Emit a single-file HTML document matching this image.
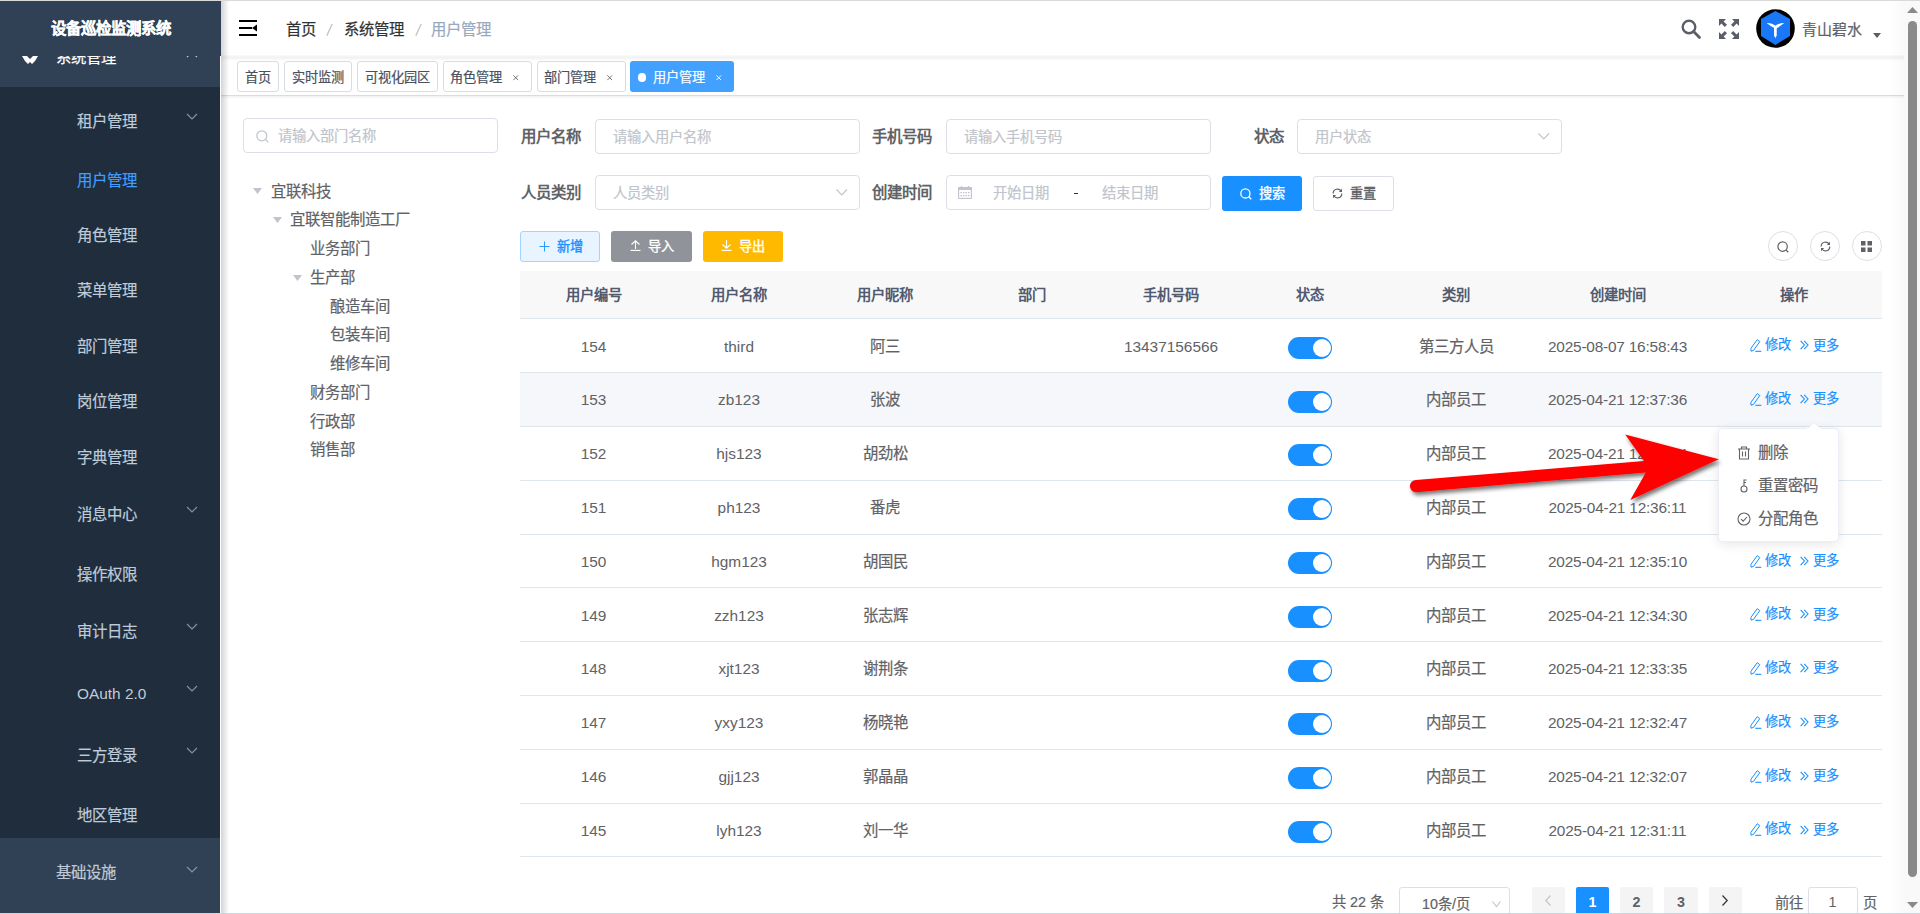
<!DOCTYPE html><html lang="zh-CN"><head><meta charset="utf-8"><title>用户管理</title><style>
*{box-sizing:border-box;margin:0;padding:0}
html,body{width:1920px;height:914px;overflow:hidden;background:#fff}
body{position:relative;font-family:"Liberation Sans",sans-serif;}
.t{position:absolute;white-space:nowrap;-webkit-text-stroke:0.2px currentColor}
.b{position:absolute}
svg{position:absolute;overflow:visible}
</style></head><body>
<div class="b" style="left:0px;top:0px;width:1920px;height:1px;background:#d9d9d9;z-index:50"></div>
<div class="b" style="left:0px;top:1px;width:220px;height:913px;background:#1f2d3d"></div>
<div class="b" style="left:0px;top:1px;width:220px;height:86px;background:#304156"></div>
<div class="b" style="left:0px;top:838px;width:220px;height:75px;background:#304156"></div>
<div class="t " style="left:56px;top:48.00px;font-size:15.4px;line-height:20px;color:#ffffff;font-weight:normal;">系统管理</div>
<svg style="left:22px;top:50px" width="16" height="16" viewBox="0 0 16 16"><path d="M0 6 L5 6 L8 9 L11 6 L16 6 L13 11 L10 14 L8 12 L6 14 L3 11 Z" fill="#fff"/></svg>
<div class="b" style="left:0px;top:1px;width:221px;height:55px;background:#304156;z-index:2"></div>
<div class="t " style="left:0px;top:18.00px;font-size:15.4px;line-height:22px;color:#fff;font-weight:bold;-webkit-text-stroke:0;width:221px;text-align:center;z-index:3;left:0;-webkit-text-stroke:0.3px #fff">设备巡检监测系统</div>
<div class="t " style="left:77px;top:110.50px;font-size:15.4px;line-height:22px;color:#bfcbd9;font-weight:normal;">租户管理</div>
<svg style="left:187px;top:113.5px;z-index:1" width="10" height="6" viewBox="0 0 10 6"><path d="M0 0 L5 5 L10 0" fill="none" stroke="#909399" stroke-width="1.1"/></svg>
<div class="t " style="left:77px;top:170.00px;font-size:15.4px;line-height:22px;color:#409eff;font-weight:normal;">用户管理</div>
<div class="t " style="left:77px;top:225.00px;font-size:15.4px;line-height:22px;color:#bfcbd9;font-weight:normal;">角色管理</div>
<div class="t " style="left:77px;top:280.00px;font-size:15.4px;line-height:22px;color:#bfcbd9;font-weight:normal;">菜单管理</div>
<div class="t " style="left:77px;top:335.50px;font-size:15.4px;line-height:22px;color:#bfcbd9;font-weight:normal;">部门管理</div>
<div class="t " style="left:77px;top:391.00px;font-size:15.4px;line-height:22px;color:#bfcbd9;font-weight:normal;">岗位管理</div>
<div class="t " style="left:77px;top:446.50px;font-size:15.4px;line-height:22px;color:#bfcbd9;font-weight:normal;">字典管理</div>
<div class="t " style="left:77px;top:503.50px;font-size:15.4px;line-height:22px;color:#bfcbd9;font-weight:normal;">消息中心</div>
<svg style="left:187px;top:506.5px;z-index:1" width="10" height="6" viewBox="0 0 10 6"><path d="M0 0 L5 5 L10 0" fill="none" stroke="#909399" stroke-width="1.1"/></svg>
<div class="t " style="left:77px;top:563.50px;font-size:15.4px;line-height:22px;color:#bfcbd9;font-weight:normal;">操作权限</div>
<div class="t " style="left:77px;top:621.00px;font-size:15.4px;line-height:22px;color:#bfcbd9;font-weight:normal;">审计日志</div>
<svg style="left:187px;top:624px;z-index:1" width="10" height="6" viewBox="0 0 10 6"><path d="M0 0 L5 5 L10 0" fill="none" stroke="#909399" stroke-width="1.1"/></svg>
<div class="t " style="left:77px;top:682.50px;font-size:15.4px;line-height:22px;color:#bfcbd9;font-weight:normal;-webkit-text-stroke:0;">OAuth 2.0</div>
<svg style="left:187px;top:685.5px;z-index:1" width="10" height="6" viewBox="0 0 10 6"><path d="M0 0 L5 5 L10 0" fill="none" stroke="#909399" stroke-width="1.1"/></svg>
<div class="t " style="left:77px;top:744.50px;font-size:15.4px;line-height:22px;color:#bfcbd9;font-weight:normal;">三方登录</div>
<svg style="left:187px;top:747.5px;z-index:1" width="10" height="6" viewBox="0 0 10 6"><path d="M0 0 L5 5 L10 0" fill="none" stroke="#909399" stroke-width="1.1"/></svg>
<div class="t " style="left:77px;top:804.50px;font-size:15.4px;line-height:22px;color:#bfcbd9;font-weight:normal;">地区管理</div>
<svg style="left:187px;top:51px;z-index:1" width="10" height="6" viewBox="0 0 10 6"><path d="M0 6 L5 1 L10 6" fill="none" stroke="#bfcbd9" stroke-width="1.1"/></svg>
<div class="t " style="left:55.5px;top:861.50px;font-size:15.4px;line-height:22px;color:#bfcbd9;font-weight:normal;">基础设施</div>
<svg style="left:187px;top:867px;z-index:1" width="10" height="6" viewBox="0 0 10 6"><path d="M0 0 L5 5 L10 0" fill="none" stroke="#909399" stroke-width="1.1"/></svg>
<div class="b" style="left:220px;top:56px;width:1px;height:858px;background:#fff;z-index:4"></div>
<div class="b" style="left:221px;top:1px;width:8px;height:913px;background:linear-gradient(to right, rgba(0,21,41,0.18), rgba(0,21,41,0));z-index:4"></div>
<div class="b" style="left:221px;top:55px;width:1683px;height:6px;background:linear-gradient(rgba(0,21,41,0.02),rgba(0,21,41,0.06) 40%,rgba(0,21,41,0))"></div>
<svg style="left:239px;top:20px" width="18" height="16" viewBox="0 0 18 16"><rect x="0" y="0" width="18" height="2" fill="#000"/><rect x="0" y="7" width="13" height="2" fill="#000"/><path d="M13 8 L18 4.5 L18 11.5 Z" fill="#000"/><rect x="0" y="14" width="18" height="2" fill="#000"/></svg>
<div class="t " style="left:286px;top:19.00px;font-size:15.4px;line-height:22px;color:#303133;font-weight:normal;">首页</div>
<svg style="left:325px;top:23px" width="9" height="14" viewBox="0 0 9 14"><path d="M7.2 1 L1.8 12.8" stroke="#c0c4cc" stroke-width="1.4"/></svg>
<div class="t " style="left:343.5px;top:19.00px;font-size:15.4px;line-height:22px;color:#303133;font-weight:normal;">系统管理</div>
<svg style="left:413.5px;top:23px" width="9" height="14" viewBox="0 0 9 14"><path d="M7.2 1 L1.8 12.8" stroke="#c0c4cc" stroke-width="1.4"/></svg>
<div class="t " style="left:431px;top:19.00px;font-size:15.4px;line-height:22px;color:#97a8be;font-weight:normal;">用户管理</div>
<svg style="left:1681px;top:19px" width="20" height="20" viewBox="0 0 20 20"><circle cx="8" cy="8" r="6.3" fill="none" stroke="#5a5e66" stroke-width="2.4"/><path d="M12.6 12.6 L18.5 18.5" stroke="#5a5e66" stroke-width="2.8" stroke-linecap="round"/></svg>
<svg style="left:1719px;top:19px" width="20" height="20" viewBox="0 0 20 20" fill="#5a5e66"><path d="M0 0 L7 0 L4.6 2.4 L8 5.8 L5.8 8 L2.4 4.6 L0 7 Z"/><path d="M20 0 L13 0 L15.4 2.4 L12 5.8 L14.2 8 L17.6 4.6 L20 7 Z"/><path d="M0 20 L7 20 L4.6 17.6 L8 14.2 L5.8 12 L2.4 15.4 L0 13 Z"/><path d="M20 20 L13 20 L15.4 17.6 L12 14.2 L14.2 12 L17.6 15.4 L20 13 Z"/></svg>
<svg style="left:1756px;top:9px" width="39" height="39" viewBox="0 0 39 39"><circle cx="19.5" cy="19.5" r="19.3" fill="#000"/><path d="M19.4 1.9 L34 9.9 L34 26.9 L19.4 35.9 L5 26.9 L5 9.9 Z" fill="#1a78f8"/><path d="M10.6 14.1 Q15 14 19.4 16.4 L19.4 19.8 Q15 17.6 10.6 14.1 Z" fill="#fff"/><path d="M28.2 14.1 Q23.8 14 19.4 16.4 L19.4 19.8 Q23.8 17.6 28.2 14.1 Z" fill="#fff"/><path d="M18 17.5 L20.8 17.5 L20.7 26.6 L19.4 29.2 L18.1 26.6 Z" fill="#fff"/></svg>
<div class="t " style="left:1801.5px;top:18.50px;font-size:15px;line-height:22px;color:#606266;font-weight:normal;">青山碧水</div>
<svg style="left:1873px;top:33px" width="8" height="5" viewBox="0 0 8 5"><path d="M0 0 L8 0 L4 5 Z" fill="#5a5e66"/></svg>
<div class="b" style="left:221px;top:95px;width:1683px;height:1px;background:#d8dce5"></div>
<div class="b" style="left:221px;top:96px;width:1683px;height:3px;background:linear-gradient(rgba(0,0,0,0.06),rgba(0,0,0,0))"></div>
<div class="b" style="left:237px;top:61px;width:42px;height:31px;border:1px solid #d8dce5;border-radius:3px;background:#fff"></div>
<div class="t " style="left:244.5px;top:68.50px;font-size:13.2px;line-height:18px;color:#495060;font-weight:normal;">首页</div>
<div class="b" style="left:284px;top:61px;width:68px;height:31px;border:1px solid #d8dce5;border-radius:3px;background:#fff"></div>
<div class="t " style="left:291.5px;top:68.50px;font-size:13.2px;line-height:18px;color:#495060;font-weight:normal;">实时监测</div>
<div class="b" style="left:357px;top:61px;width:80.5px;height:31px;border:1px solid #d8dce5;border-radius:3px;background:#fff"></div>
<div class="t " style="left:364.5px;top:68.50px;font-size:13.2px;line-height:18px;color:#495060;font-weight:normal;">可视化园区</div>
<div class="b" style="left:442.5px;top:61px;width:89.0px;height:31px;border:1px solid #d8dce5;border-radius:3px;background:#fff"></div>
<div class="t " style="left:450.0px;top:68.50px;font-size:13.2px;line-height:18px;color:#495060;font-weight:normal;">角色管理</div>
<svg style="left:513.0px;top:75.3px" width="5.5" height="5.5" viewBox="0 0 5.5 5.5"><path d="M0.4 0.4 L5.1 5.1 M5.1 0.4 L0.4 5.1" stroke="#6a6e75" stroke-width="0.95"/></svg>
<div class="b" style="left:536.5px;top:61px;width:89.0px;height:31px;border:1px solid #d8dce5;border-radius:3px;background:#fff"></div>
<div class="t " style="left:544.0px;top:68.50px;font-size:13.2px;line-height:18px;color:#495060;font-weight:normal;">部门管理</div>
<svg style="left:607.0px;top:75.3px" width="5.5" height="5.5" viewBox="0 0 5.5 5.5"><path d="M0.4 0.4 L5.1 5.1 M5.1 0.4 L0.4 5.1" stroke="#6a6e75" stroke-width="0.95"/></svg>
<div class="b" style="left:630px;top:61px;width:104px;height:31px;background:#42a0ff;border-radius:3px"></div>
<div class="b" style="left:638px;top:73.3px;width:8.4px;height:8.4px;background:#fff;border-radius:50%"></div>
<div class="t " style="left:652.5px;top:68.50px;font-size:13.2px;line-height:18px;color:#fff;font-weight:normal;">用户管理</div>
<svg style="left:715.5px;top:75.3px" width="5.5" height="5.5" viewBox="0 0 5.5 5.5"><path d="M0.4 0.4 L5.1 5.1 M5.1 0.4 L0.4 5.1" stroke="#fff" stroke-width="0.95"/></svg>
<div class="b" style="left:1890px;top:1px;width:14px;height:912px;background:linear-gradient(to right, rgba(0,0,0,0), rgba(0,0,0,0.025))"></div>
<div class="b" style="left:1904px;top:1px;width:16px;height:912px;background:#f9f9f9"></div>
<div class="b" style="left:1908px;top:21px;width:9px;height:856px;background:#8a8a8a;border-radius:5px"></div>
<svg style="left:1907px;top:7px" width="11" height="6" viewBox="0 0 11 6"><path d="M0 6 L5.5 0 L11 6 Z" fill="#8a8a8a"/></svg>
<svg style="left:1907px;top:902px" width="11" height="6" viewBox="0 0 11 6"><path d="M0 0 L5.5 6 L11 0 Z" fill="#8a8a8a"/></svg>
<div class="b" style="left:0px;top:913px;width:1920px;height:1px;background:#c9d6e0;z-index:60"></div>
<div class="b" style="left:243px;top:118px;width:255px;height:35px;border:1px solid #dcdfe6;border-radius:4px;background:#fff"></div>
<svg style="left:255.5px;top:129.5px" width="13" height="13" viewBox="0 0 13 13"><circle cx="5.8" cy="5.8" r="5" fill="none" stroke="#c0c4cc" stroke-width="1.2"/><path d="M9.5 9.5 L12.3 12.3" stroke="#c0c4cc" stroke-width="1.2"/></svg>
<div class="t " style="left:278px;top:125.50px;font-size:14.3px;line-height:20px;color:#c0c4cc;font-weight:normal;">请输入部门名称</div>
<div class="t " style="left:270.5px;top:180.50px;font-size:15.4px;line-height:22px;color:#606266;font-weight:normal;">宜联科技</div>
<svg style="left:253.0px;top:188.0px" width="9" height="6" viewBox="0 0 9 6"><path d="M0 0 L9 0 L4.5 6 Z" fill="#c0c4cc"/></svg>
<div class="t " style="left:290px;top:209.00px;font-size:15.4px;line-height:22px;color:#606266;font-weight:normal;">宜联智能制造工厂</div>
<svg style="left:272.5px;top:216.5px" width="9" height="6" viewBox="0 0 9 6"><path d="M0 0 L9 0 L4.5 6 Z" fill="#c0c4cc"/></svg>
<div class="t " style="left:310px;top:238.00px;font-size:15.4px;line-height:22px;color:#606266;font-weight:normal;">业务部门</div>
<div class="t " style="left:310px;top:267.00px;font-size:15.4px;line-height:22px;color:#606266;font-weight:normal;">生产部</div>
<svg style="left:292.5px;top:274.5px" width="9" height="6" viewBox="0 0 9 6"><path d="M0 0 L9 0 L4.5 6 Z" fill="#c0c4cc"/></svg>
<div class="t " style="left:330px;top:295.50px;font-size:15.4px;line-height:22px;color:#606266;font-weight:normal;">酿造车间</div>
<div class="t " style="left:330px;top:324.00px;font-size:15.4px;line-height:22px;color:#606266;font-weight:normal;">包装车间</div>
<div class="t " style="left:330px;top:353.00px;font-size:15.4px;line-height:22px;color:#606266;font-weight:normal;">维修车间</div>
<div class="t " style="left:310px;top:382.00px;font-size:15.4px;line-height:22px;color:#606266;font-weight:normal;">财务部门</div>
<div class="t " style="left:310px;top:410.50px;font-size:15.4px;line-height:22px;color:#606266;font-weight:normal;">行政部</div>
<div class="t " style="left:310px;top:439.00px;font-size:15.4px;line-height:22px;color:#606266;font-weight:normal;">销售部</div>
<div class="t " style="left:520.5px;top:125.50px;font-size:15.4px;line-height:22px;color:#606266;font-weight:bold;-webkit-text-stroke:0;">用户名称</div>
<div class="b" style="left:595px;top:119px;width:265px;height:35px;border:1px solid #dcdfe6;border-radius:4px;background:#fff"></div>
<div class="t " style="left:613px;top:126.50px;font-size:14.3px;line-height:20px;color:#c0c4cc;font-weight:normal;">请输入用户名称</div>
<div class="t " style="left:872px;top:125.50px;font-size:15.4px;line-height:22px;color:#606266;font-weight:bold;-webkit-text-stroke:0;">手机号码</div>
<div class="b" style="left:946px;top:119px;width:265px;height:35px;border:1px solid #dcdfe6;border-radius:4px;background:#fff"></div>
<div class="t " style="left:964px;top:126.50px;font-size:14.3px;line-height:20px;color:#c0c4cc;font-weight:normal;">请输入手机号码</div>
<div class="t " style="left:1254px;top:125.50px;font-size:15.4px;line-height:22px;color:#606266;font-weight:bold;-webkit-text-stroke:0;">状态</div>
<div class="b" style="left:1297px;top:119px;width:265px;height:35px;border:1px solid #dcdfe6;border-radius:4px;background:#fff"></div>
<div class="t " style="left:1315px;top:126.50px;font-size:14.3px;line-height:20px;color:#c0c4cc;font-weight:normal;">用户状态</div>
<svg style="left:1537.5px;top:133px" width="11.5" height="6.5" viewBox="0 0 11.5 6.5"><path d="M0.5 0.5 L5.75 6 L11 0.5" fill="none" stroke="#c0c4cc" stroke-width="1.1"/></svg>
<div class="t " style="left:520.5px;top:181.50px;font-size:15.4px;line-height:22px;color:#606266;font-weight:bold;-webkit-text-stroke:0;">人员类别</div>
<div class="b" style="left:595px;top:175px;width:265px;height:35px;border:1px solid #dcdfe6;border-radius:4px;background:#fff"></div>
<div class="t " style="left:613px;top:182.50px;font-size:14.3px;line-height:20px;color:#c0c4cc;font-weight:normal;">人员类别</div>
<svg style="left:835.5px;top:189px" width="11.5" height="6.5" viewBox="0 0 11.5 6.5"><path d="M0.5 0.5 L5.75 6 L11 0.5" fill="none" stroke="#c0c4cc" stroke-width="1.1"/></svg>
<div class="t " style="left:872px;top:181.50px;font-size:15.4px;line-height:22px;color:#606266;font-weight:bold;-webkit-text-stroke:0;">创建时间</div>
<div class="b" style="left:946px;top:175px;width:265px;height:35px;border:1px solid #dcdfe6;border-radius:4px;background:#fff"></div>
<svg style="left:958px;top:186px" width="14" height="13" viewBox="0 0 14 13"><rect x="0.6" y="1.6" width="12.8" height="10.8" fill="none" stroke="#c0c4cc" stroke-width="1.1"/><rect x="0.6" y="1.6" width="12.8" height="2.4" fill="#c0c4cc"/><path d="M3.5 0 V2 M10.5 0 V2" stroke="#c0c4cc" stroke-width="1.2"/><g fill="#c0c4cc"><rect x="2.5" y="6" width="1.5" height="1.3"/><rect x="5" y="6" width="1.5" height="1.3"/><rect x="7.5" y="6" width="1.5" height="1.3"/><rect x="10" y="6" width="1.5" height="1.3"/><rect x="2.5" y="9" width="1.5" height="1.3"/><rect x="5" y="9" width="1.5" height="1.3"/><rect x="7.5" y="9" width="1.5" height="1.3"/><rect x="10" y="9" width="1.5" height="1.3"/></g></svg>
<div class="t " style="left:993px;top:182.50px;font-size:14.3px;line-height:20px;color:#c0c4cc;font-weight:normal;">开始日期</div>
<div class="b" style="left:1074px;top:192.5px;width:4px;height:1.2px;background:#303133"></div>
<div class="t " style="left:1102px;top:182.50px;font-size:14.3px;line-height:20px;color:#c0c4cc;font-weight:normal;">结束日期</div>
<div class="b" style="left:1222px;top:176px;width:80px;height:35px;background:#1890ff;border-radius:3px"></div>
<svg style="left:1240px;top:187.5px" width="12" height="12" viewBox="0 0 12 12"><circle cx="5.4" cy="5.4" r="4.6" fill="none" stroke="#fff" stroke-width="1.3"/><path d="M8.8 8.8 L11.3 11.3" stroke="#fff" stroke-width="1.3"/></svg>
<div class="t " style="left:1259px;top:184.50px;font-size:13.2px;line-height:18px;color:#fff;font-weight:normal;-webkit-text-stroke:0.35px currentColor">搜索</div>
<div class="b" style="left:1313px;top:176px;width:81px;height:35px;border:1px solid #dcdfe6;border-radius:3px;background:#fff"></div>
<svg style="left:1332px;top:188px" width="11" height="11" viewBox="0 0 11 11"><path d="M1.2 5.5 A4.3 4.3 0 0 1 9.2 3.2" fill="none" stroke="#606266" stroke-width="1.2"/><path d="M9.8 5.5 A4.3 4.3 0 0 1 1.8 7.8" fill="none" stroke="#606266" stroke-width="1.2"/><path d="M10 0.8 L10 4 L6.8 4 Z" fill="#606266"/><path d="M1 10.2 L1 7 L4.2 7 Z" fill="#606266"/></svg>
<div class="t " style="left:1350px;top:184.50px;font-size:13.2px;line-height:18px;color:#606266;font-weight:normal;-webkit-text-stroke:0.35px currentColor">重置</div>
<div class="b" style="left:520px;top:231px;width:80px;height:31px;background:#e8f4ff;border:1px solid #a3d3ff;border-radius:3px"></div>
<svg style="left:538.5px;top:240.5px" width="11" height="11" viewBox="0 0 11 11"><path d="M5.5 0.5 V10.5 M0.5 5.5 H10.5" stroke="#1890ff" stroke-width="0.9"/></svg>
<div class="t " style="left:557px;top:237.50px;font-size:13.2px;line-height:18px;color:#1890ff;font-weight:normal;-webkit-text-stroke:0.35px currentColor">新增</div>
<div class="b" style="left:611px;top:231px;width:81px;height:31px;background:#909399;border-radius:3px"></div>
<svg style="left:630px;top:240px" width="11" height="11" viewBox="0 0 11 11"><path d="M1.5 4.5 L5.5 0.8 L9.5 4.5 M5.5 1 V9" fill="none" stroke="#fff" stroke-width="1.1"/><path d="M0.5 10.4 H10.5" stroke="#fff" stroke-width="1.1"/></svg>
<div class="t " style="left:648px;top:237.50px;font-size:13.2px;line-height:18px;color:#fff;font-weight:normal;-webkit-text-stroke:0.35px currentColor">导入</div>
<div class="b" style="left:703px;top:231px;width:80px;height:31px;background:#ffba00;border-radius:3px"></div>
<svg style="left:721px;top:240px" width="11" height="11" viewBox="0 0 11 11"><path d="M1.5 4.5 L5.5 8.2 L9.5 4.5 M5.5 0 V8" fill="none" stroke="#fff" stroke-width="1.1"/><path d="M0.5 10.4 H10.5" stroke="#fff" stroke-width="1.1"/></svg>
<div class="t " style="left:739px;top:237.50px;font-size:13.2px;line-height:18px;color:#fff;font-weight:normal;-webkit-text-stroke:0.35px currentColor">导出</div>
<div class="b" style="left:1768px;top:231px;width:30px;height:30px;border:1px solid #dcdfe6;border-radius:50%;background:#fff"></div>
<div class="b" style="left:1810px;top:231px;width:30px;height:30px;border:1px solid #dcdfe6;border-radius:50%;background:#fff"></div>
<div class="b" style="left:1851.5px;top:231px;width:30px;height:30px;border:1px solid #dcdfe6;border-radius:50%;background:#fff"></div>
<svg style="left:1777px;top:240.5px" width="12" height="12" viewBox="0 0 12 12"><circle cx="5.6" cy="5.6" r="4.7" fill="none" stroke="#606266" stroke-width="1.2"/><path d="M8.9 8.9 L11.3 11.3" stroke="#606266" stroke-width="1.3"/></svg>
<svg style="left:1820px;top:241px" width="11" height="11" viewBox="0 0 11 11"><path d="M1.2 5.5 A4.3 4.3 0 0 1 9.2 3.2" fill="none" stroke="#606266" stroke-width="1.2"/><path d="M9.8 5.5 A4.3 4.3 0 0 1 1.8 7.8" fill="none" stroke="#606266" stroke-width="1.2"/><path d="M10 0.8 L10 4 L6.8 4 Z" fill="#606266"/><path d="M1 10.2 L1 7 L4.2 7 Z" fill="#606266"/></svg>
<svg style="left:1861px;top:241px" width="11" height="11" viewBox="0 0 11 11" fill="#606266"><rect x="0" y="0" width="4.5" height="4.5"/><rect x="6.5" y="0" width="4.5" height="4.5"/><rect x="0" y="6.5" width="4.5" height="4.5"/><rect x="6.5" y="6.5" width="4.5" height="4.5"/></svg>
<div class="b" style="left:520px;top:271px;width:1362px;height:47px;background:#f8f8f9"></div>
<div class="b" style="left:520px;top:318px;width:1362px;height:1px;background:#dfe6ec"></div>
<div class="t" style="left:443.50px;width:300px;text-align:center;top:285.00px;font-size:14.3px;line-height:20px;color:#515a6e;font-weight:bold;-webkit-text-stroke:0;">用户编号</div>
<div class="t" style="left:589.00px;width:300px;text-align:center;top:285.00px;font-size:14.3px;line-height:20px;color:#515a6e;font-weight:bold;-webkit-text-stroke:0;">用户名称</div>
<div class="t" style="left:735.00px;width:300px;text-align:center;top:285.00px;font-size:14.3px;line-height:20px;color:#515a6e;font-weight:bold;-webkit-text-stroke:0;">用户昵称</div>
<div class="t" style="left:881.50px;width:300px;text-align:center;top:285.00px;font-size:14.3px;line-height:20px;color:#515a6e;font-weight:bold;-webkit-text-stroke:0;">部门</div>
<div class="t" style="left:1021.00px;width:300px;text-align:center;top:285.00px;font-size:14.3px;line-height:20px;color:#515a6e;font-weight:bold;-webkit-text-stroke:0;">手机号码</div>
<div class="t" style="left:1160.00px;width:300px;text-align:center;top:285.00px;font-size:14.3px;line-height:20px;color:#515a6e;font-weight:bold;-webkit-text-stroke:0;">状态</div>
<div class="t" style="left:1306.00px;width:300px;text-align:center;top:285.00px;font-size:14.3px;line-height:20px;color:#515a6e;font-weight:bold;-webkit-text-stroke:0;">类别</div>
<div class="t" style="left:1467.50px;width:300px;text-align:center;top:285.00px;font-size:14.3px;line-height:20px;color:#515a6e;font-weight:bold;-webkit-text-stroke:0;">创建时间</div>
<div class="t" style="left:1644.00px;width:300px;text-align:center;top:285.00px;font-size:14.3px;line-height:20px;color:#515a6e;font-weight:bold;-webkit-text-stroke:0;">操作</div>
<div class="b" style="left:520px;top:372.28px;width:1362px;height:1px;background:#dfe6ec"></div>
<div class="t" style="left:443.50px;width:300px;text-align:center;top:336.69px;font-size:15.4px;line-height:20px;color:#606266;font-weight:normal;-webkit-text-stroke:0;">154</div>
<div class="t" style="left:589.00px;width:300px;text-align:center;top:336.69px;font-size:15.4px;line-height:20px;color:#606266;font-weight:normal;-webkit-text-stroke:0;">third</div>
<div class="t" style="left:735.00px;width:300px;text-align:center;top:336.69px;font-size:15.4px;line-height:20px;color:#606266;font-weight:normal;">阿三</div>
<div class="t" style="left:1021.00px;width:300px;text-align:center;top:336.69px;font-size:15.4px;line-height:20px;color:#606266;font-weight:normal;-webkit-text-stroke:0;">13437156566</div>
<div class="b" style="left:1288px;top:336.89px;width:44px;height:22px;background:#1890ff;border-radius:11px"></div>
<div class="b" style="left:1312.5px;top:338.89px;width:18px;height:18px;background:#fff;border-radius:50%"></div>
<div class="t" style="left:1306.00px;width:300px;text-align:center;top:336.69px;font-size:15.4px;line-height:20px;color:#606266;font-weight:normal;">第三方人员</div>
<div class="t" style="left:1467.50px;width:300px;text-align:center;top:336.69px;font-size:15.4px;line-height:20px;color:#606266;font-weight:normal;-webkit-text-stroke:0;letter-spacing:-0.2px">2025-08-07 16:58:43</div>
<svg style="left:1750px;top:339.39px" width="12" height="13" viewBox="0 0 12 13"><path d="M1 12.2 L0.9 9.4 L7.2 0.7 L9.8 2.6 L3.5 11.4 Z" fill="none" stroke="#1890ff" stroke-width="1"/><path d="M5.3 12.3 H11.3" stroke="#1890ff" stroke-width="1.1"/></svg>
<div class="t " style="left:1764.5px;top:336.39px;font-size:13.2px;line-height:18px;color:#1890ff;font-weight:normal;">修改</div>
<svg style="left:1800px;top:340.49px" width="9" height="11" viewBox="0 0 9 11"><path d="M0.6 0.8 L4.4 5 L0.6 9.2 M4.2 0.8 L8 5 L4.2 9.2" fill="none" stroke="#1890ff" stroke-width="1.1"/></svg>
<div class="t " style="left:1812.5px;top:336.69px;font-size:13.2px;line-height:18px;color:#1890ff;font-weight:normal;">更多</div>
<div class="b" style="left:520px;top:373.28px;width:1362px;height:52.78px;background:#f5f7fa"></div>
<div class="b" style="left:520px;top:426.05999999999995px;width:1362px;height:1px;background:#dfe6ec"></div>
<div class="t" style="left:443.50px;width:300px;text-align:center;top:390.47px;font-size:15.4px;line-height:20px;color:#606266;font-weight:normal;-webkit-text-stroke:0;">153</div>
<div class="t" style="left:589.00px;width:300px;text-align:center;top:390.47px;font-size:15.4px;line-height:20px;color:#606266;font-weight:normal;-webkit-text-stroke:0;">zb123</div>
<div class="t" style="left:735.00px;width:300px;text-align:center;top:390.47px;font-size:15.4px;line-height:20px;color:#606266;font-weight:normal;">张波</div>
<div class="b" style="left:1288px;top:390.66999999999996px;width:44px;height:22px;background:#1890ff;border-radius:11px"></div>
<div class="b" style="left:1312.5px;top:392.66999999999996px;width:18px;height:18px;background:#fff;border-radius:50%"></div>
<div class="t" style="left:1306.00px;width:300px;text-align:center;top:390.47px;font-size:15.4px;line-height:20px;color:#606266;font-weight:normal;">内部员工</div>
<div class="t" style="left:1467.50px;width:300px;text-align:center;top:390.47px;font-size:15.4px;line-height:20px;color:#606266;font-weight:normal;-webkit-text-stroke:0;letter-spacing:-0.2px">2025-04-21 12:37:36</div>
<svg style="left:1750px;top:393.17px" width="12" height="13" viewBox="0 0 12 13"><path d="M1 12.2 L0.9 9.4 L7.2 0.7 L9.8 2.6 L3.5 11.4 Z" fill="none" stroke="#1890ff" stroke-width="1"/><path d="M5.3 12.3 H11.3" stroke="#1890ff" stroke-width="1.1"/></svg>
<div class="t " style="left:1764.5px;top:390.17px;font-size:13.2px;line-height:18px;color:#1890ff;font-weight:normal;">修改</div>
<svg style="left:1800px;top:394.27px" width="9" height="11" viewBox="0 0 9 11"><path d="M0.6 0.8 L4.4 5 L0.6 9.2 M4.2 0.8 L8 5 L4.2 9.2" fill="none" stroke="#1890ff" stroke-width="1.1"/></svg>
<div class="t " style="left:1812.5px;top:390.47px;font-size:13.2px;line-height:18px;color:#1890ff;font-weight:normal;">更多</div>
<div class="b" style="left:520px;top:479.84000000000003px;width:1362px;height:1px;background:#dfe6ec"></div>
<div class="t" style="left:443.50px;width:300px;text-align:center;top:444.25px;font-size:15.4px;line-height:20px;color:#606266;font-weight:normal;-webkit-text-stroke:0;">152</div>
<div class="t" style="left:589.00px;width:300px;text-align:center;top:444.25px;font-size:15.4px;line-height:20px;color:#606266;font-weight:normal;-webkit-text-stroke:0;">hjs123</div>
<div class="t" style="left:735.00px;width:300px;text-align:center;top:444.25px;font-size:15.4px;line-height:20px;color:#606266;font-weight:normal;">胡劲松</div>
<div class="b" style="left:1288px;top:444.45px;width:44px;height:22px;background:#1890ff;border-radius:11px"></div>
<div class="b" style="left:1312.5px;top:446.45px;width:18px;height:18px;background:#fff;border-radius:50%"></div>
<div class="t" style="left:1306.00px;width:300px;text-align:center;top:444.25px;font-size:15.4px;line-height:20px;color:#606266;font-weight:normal;">内部员工</div>
<div class="t" style="left:1467.50px;width:300px;text-align:center;top:444.25px;font-size:15.4px;line-height:20px;color:#606266;font-weight:normal;-webkit-text-stroke:0;letter-spacing:-0.2px">2025-04-21 12:36:54</div>
<svg style="left:1750px;top:446.95px" width="12" height="13" viewBox="0 0 12 13"><path d="M1 12.2 L0.9 9.4 L7.2 0.7 L9.8 2.6 L3.5 11.4 Z" fill="none" stroke="#1890ff" stroke-width="1"/><path d="M5.3 12.3 H11.3" stroke="#1890ff" stroke-width="1.1"/></svg>
<div class="t " style="left:1764.5px;top:443.95px;font-size:13.2px;line-height:18px;color:#1890ff;font-weight:normal;">修改</div>
<svg style="left:1800px;top:448.05px" width="9" height="11" viewBox="0 0 9 11"><path d="M0.6 0.8 L4.4 5 L0.6 9.2 M4.2 0.8 L8 5 L4.2 9.2" fill="none" stroke="#1890ff" stroke-width="1.1"/></svg>
<div class="t " style="left:1812.5px;top:444.25px;font-size:13.2px;line-height:18px;color:#1890ff;font-weight:normal;">更多</div>
<div class="b" style="left:520px;top:533.62px;width:1362px;height:1px;background:#dfe6ec"></div>
<div class="t" style="left:443.50px;width:300px;text-align:center;top:498.03px;font-size:15.4px;line-height:20px;color:#606266;font-weight:normal;-webkit-text-stroke:0;">151</div>
<div class="t" style="left:589.00px;width:300px;text-align:center;top:498.03px;font-size:15.4px;line-height:20px;color:#606266;font-weight:normal;-webkit-text-stroke:0;">ph123</div>
<div class="t" style="left:735.00px;width:300px;text-align:center;top:498.03px;font-size:15.4px;line-height:20px;color:#606266;font-weight:normal;">番虎</div>
<div class="b" style="left:1288px;top:498.23px;width:44px;height:22px;background:#1890ff;border-radius:11px"></div>
<div class="b" style="left:1312.5px;top:500.23px;width:18px;height:18px;background:#fff;border-radius:50%"></div>
<div class="t" style="left:1306.00px;width:300px;text-align:center;top:498.03px;font-size:15.4px;line-height:20px;color:#606266;font-weight:normal;">内部员工</div>
<div class="t" style="left:1467.50px;width:300px;text-align:center;top:498.03px;font-size:15.4px;line-height:20px;color:#606266;font-weight:normal;-webkit-text-stroke:0;letter-spacing:-0.2px">2025-04-21 12:36:11</div>
<svg style="left:1750px;top:500.73px" width="12" height="13" viewBox="0 0 12 13"><path d="M1 12.2 L0.9 9.4 L7.2 0.7 L9.8 2.6 L3.5 11.4 Z" fill="none" stroke="#1890ff" stroke-width="1"/><path d="M5.3 12.3 H11.3" stroke="#1890ff" stroke-width="1.1"/></svg>
<div class="t " style="left:1764.5px;top:497.73px;font-size:13.2px;line-height:18px;color:#1890ff;font-weight:normal;">修改</div>
<svg style="left:1800px;top:501.83px" width="9" height="11" viewBox="0 0 9 11"><path d="M0.6 0.8 L4.4 5 L0.6 9.2 M4.2 0.8 L8 5 L4.2 9.2" fill="none" stroke="#1890ff" stroke-width="1.1"/></svg>
<div class="t " style="left:1812.5px;top:498.03px;font-size:13.2px;line-height:18px;color:#1890ff;font-weight:normal;">更多</div>
<div class="b" style="left:520px;top:587.4px;width:1362px;height:1px;background:#dfe6ec"></div>
<div class="t" style="left:443.50px;width:300px;text-align:center;top:551.81px;font-size:15.4px;line-height:20px;color:#606266;font-weight:normal;-webkit-text-stroke:0;">150</div>
<div class="t" style="left:589.00px;width:300px;text-align:center;top:551.81px;font-size:15.4px;line-height:20px;color:#606266;font-weight:normal;-webkit-text-stroke:0;">hgm123</div>
<div class="t" style="left:735.00px;width:300px;text-align:center;top:551.81px;font-size:15.4px;line-height:20px;color:#606266;font-weight:normal;">胡国民</div>
<div class="b" style="left:1288px;top:552.01px;width:44px;height:22px;background:#1890ff;border-radius:11px"></div>
<div class="b" style="left:1312.5px;top:554.01px;width:18px;height:18px;background:#fff;border-radius:50%"></div>
<div class="t" style="left:1306.00px;width:300px;text-align:center;top:551.81px;font-size:15.4px;line-height:20px;color:#606266;font-weight:normal;">内部员工</div>
<div class="t" style="left:1467.50px;width:300px;text-align:center;top:551.81px;font-size:15.4px;line-height:20px;color:#606266;font-weight:normal;-webkit-text-stroke:0;letter-spacing:-0.2px">2025-04-21 12:35:10</div>
<svg style="left:1750px;top:554.51px" width="12" height="13" viewBox="0 0 12 13"><path d="M1 12.2 L0.9 9.4 L7.2 0.7 L9.8 2.6 L3.5 11.4 Z" fill="none" stroke="#1890ff" stroke-width="1"/><path d="M5.3 12.3 H11.3" stroke="#1890ff" stroke-width="1.1"/></svg>
<div class="t " style="left:1764.5px;top:551.51px;font-size:13.2px;line-height:18px;color:#1890ff;font-weight:normal;">修改</div>
<svg style="left:1800px;top:555.61px" width="9" height="11" viewBox="0 0 9 11"><path d="M0.6 0.8 L4.4 5 L0.6 9.2 M4.2 0.8 L8 5 L4.2 9.2" fill="none" stroke="#1890ff" stroke-width="1.1"/></svg>
<div class="t " style="left:1812.5px;top:551.81px;font-size:13.2px;line-height:18px;color:#1890ff;font-weight:normal;">更多</div>
<div class="b" style="left:520px;top:641.18px;width:1362px;height:1px;background:#dfe6ec"></div>
<div class="t" style="left:443.50px;width:300px;text-align:center;top:605.59px;font-size:15.4px;line-height:20px;color:#606266;font-weight:normal;-webkit-text-stroke:0;">149</div>
<div class="t" style="left:589.00px;width:300px;text-align:center;top:605.59px;font-size:15.4px;line-height:20px;color:#606266;font-weight:normal;-webkit-text-stroke:0;">zzh123</div>
<div class="t" style="left:735.00px;width:300px;text-align:center;top:605.59px;font-size:15.4px;line-height:20px;color:#606266;font-weight:normal;">张志辉</div>
<div class="b" style="left:1288px;top:605.79px;width:44px;height:22px;background:#1890ff;border-radius:11px"></div>
<div class="b" style="left:1312.5px;top:607.79px;width:18px;height:18px;background:#fff;border-radius:50%"></div>
<div class="t" style="left:1306.00px;width:300px;text-align:center;top:605.59px;font-size:15.4px;line-height:20px;color:#606266;font-weight:normal;">内部员工</div>
<div class="t" style="left:1467.50px;width:300px;text-align:center;top:605.59px;font-size:15.4px;line-height:20px;color:#606266;font-weight:normal;-webkit-text-stroke:0;letter-spacing:-0.2px">2025-04-21 12:34:30</div>
<svg style="left:1750px;top:608.29px" width="12" height="13" viewBox="0 0 12 13"><path d="M1 12.2 L0.9 9.4 L7.2 0.7 L9.8 2.6 L3.5 11.4 Z" fill="none" stroke="#1890ff" stroke-width="1"/><path d="M5.3 12.3 H11.3" stroke="#1890ff" stroke-width="1.1"/></svg>
<div class="t " style="left:1764.5px;top:605.29px;font-size:13.2px;line-height:18px;color:#1890ff;font-weight:normal;">修改</div>
<svg style="left:1800px;top:609.39px" width="9" height="11" viewBox="0 0 9 11"><path d="M0.6 0.8 L4.4 5 L0.6 9.2 M4.2 0.8 L8 5 L4.2 9.2" fill="none" stroke="#1890ff" stroke-width="1.1"/></svg>
<div class="t " style="left:1812.5px;top:605.59px;font-size:13.2px;line-height:18px;color:#1890ff;font-weight:normal;">更多</div>
<div class="b" style="left:520px;top:694.96px;width:1362px;height:1px;background:#dfe6ec"></div>
<div class="t" style="left:443.50px;width:300px;text-align:center;top:659.37px;font-size:15.4px;line-height:20px;color:#606266;font-weight:normal;-webkit-text-stroke:0;">148</div>
<div class="t" style="left:589.00px;width:300px;text-align:center;top:659.37px;font-size:15.4px;line-height:20px;color:#606266;font-weight:normal;-webkit-text-stroke:0;">xjt123</div>
<div class="t" style="left:735.00px;width:300px;text-align:center;top:659.37px;font-size:15.4px;line-height:20px;color:#606266;font-weight:normal;">谢荆条</div>
<div class="b" style="left:1288px;top:659.57px;width:44px;height:22px;background:#1890ff;border-radius:11px"></div>
<div class="b" style="left:1312.5px;top:661.57px;width:18px;height:18px;background:#fff;border-radius:50%"></div>
<div class="t" style="left:1306.00px;width:300px;text-align:center;top:659.37px;font-size:15.4px;line-height:20px;color:#606266;font-weight:normal;">内部员工</div>
<div class="t" style="left:1467.50px;width:300px;text-align:center;top:659.37px;font-size:15.4px;line-height:20px;color:#606266;font-weight:normal;-webkit-text-stroke:0;letter-spacing:-0.2px">2025-04-21 12:33:35</div>
<svg style="left:1750px;top:662.07px" width="12" height="13" viewBox="0 0 12 13"><path d="M1 12.2 L0.9 9.4 L7.2 0.7 L9.8 2.6 L3.5 11.4 Z" fill="none" stroke="#1890ff" stroke-width="1"/><path d="M5.3 12.3 H11.3" stroke="#1890ff" stroke-width="1.1"/></svg>
<div class="t " style="left:1764.5px;top:659.07px;font-size:13.2px;line-height:18px;color:#1890ff;font-weight:normal;">修改</div>
<svg style="left:1800px;top:663.17px" width="9" height="11" viewBox="0 0 9 11"><path d="M0.6 0.8 L4.4 5 L0.6 9.2 M4.2 0.8 L8 5 L4.2 9.2" fill="none" stroke="#1890ff" stroke-width="1.1"/></svg>
<div class="t " style="left:1812.5px;top:659.37px;font-size:13.2px;line-height:18px;color:#1890ff;font-weight:normal;">更多</div>
<div class="b" style="left:520px;top:748.74px;width:1362px;height:1px;background:#dfe6ec"></div>
<div class="t" style="left:443.50px;width:300px;text-align:center;top:713.15px;font-size:15.4px;line-height:20px;color:#606266;font-weight:normal;-webkit-text-stroke:0;">147</div>
<div class="t" style="left:589.00px;width:300px;text-align:center;top:713.15px;font-size:15.4px;line-height:20px;color:#606266;font-weight:normal;-webkit-text-stroke:0;">yxy123</div>
<div class="t" style="left:735.00px;width:300px;text-align:center;top:713.15px;font-size:15.4px;line-height:20px;color:#606266;font-weight:normal;">杨晓艳</div>
<div class="b" style="left:1288px;top:713.35px;width:44px;height:22px;background:#1890ff;border-radius:11px"></div>
<div class="b" style="left:1312.5px;top:715.35px;width:18px;height:18px;background:#fff;border-radius:50%"></div>
<div class="t" style="left:1306.00px;width:300px;text-align:center;top:713.15px;font-size:15.4px;line-height:20px;color:#606266;font-weight:normal;">内部员工</div>
<div class="t" style="left:1467.50px;width:300px;text-align:center;top:713.15px;font-size:15.4px;line-height:20px;color:#606266;font-weight:normal;-webkit-text-stroke:0;letter-spacing:-0.2px">2025-04-21 12:32:47</div>
<svg style="left:1750px;top:715.85px" width="12" height="13" viewBox="0 0 12 13"><path d="M1 12.2 L0.9 9.4 L7.2 0.7 L9.8 2.6 L3.5 11.4 Z" fill="none" stroke="#1890ff" stroke-width="1"/><path d="M5.3 12.3 H11.3" stroke="#1890ff" stroke-width="1.1"/></svg>
<div class="t " style="left:1764.5px;top:712.85px;font-size:13.2px;line-height:18px;color:#1890ff;font-weight:normal;">修改</div>
<svg style="left:1800px;top:716.95px" width="9" height="11" viewBox="0 0 9 11"><path d="M0.6 0.8 L4.4 5 L0.6 9.2 M4.2 0.8 L8 5 L4.2 9.2" fill="none" stroke="#1890ff" stroke-width="1.1"/></svg>
<div class="t " style="left:1812.5px;top:713.15px;font-size:13.2px;line-height:18px;color:#1890ff;font-weight:normal;">更多</div>
<div class="b" style="left:520px;top:802.52px;width:1362px;height:1px;background:#dfe6ec"></div>
<div class="t" style="left:443.50px;width:300px;text-align:center;top:766.93px;font-size:15.4px;line-height:20px;color:#606266;font-weight:normal;-webkit-text-stroke:0;">146</div>
<div class="t" style="left:589.00px;width:300px;text-align:center;top:766.93px;font-size:15.4px;line-height:20px;color:#606266;font-weight:normal;-webkit-text-stroke:0;">gjj123</div>
<div class="t" style="left:735.00px;width:300px;text-align:center;top:766.93px;font-size:15.4px;line-height:20px;color:#606266;font-weight:normal;">郭晶晶</div>
<div class="b" style="left:1288px;top:767.13px;width:44px;height:22px;background:#1890ff;border-radius:11px"></div>
<div class="b" style="left:1312.5px;top:769.13px;width:18px;height:18px;background:#fff;border-radius:50%"></div>
<div class="t" style="left:1306.00px;width:300px;text-align:center;top:766.93px;font-size:15.4px;line-height:20px;color:#606266;font-weight:normal;">内部员工</div>
<div class="t" style="left:1467.50px;width:300px;text-align:center;top:766.93px;font-size:15.4px;line-height:20px;color:#606266;font-weight:normal;-webkit-text-stroke:0;letter-spacing:-0.2px">2025-04-21 12:32:07</div>
<svg style="left:1750px;top:769.63px" width="12" height="13" viewBox="0 0 12 13"><path d="M1 12.2 L0.9 9.4 L7.2 0.7 L9.8 2.6 L3.5 11.4 Z" fill="none" stroke="#1890ff" stroke-width="1"/><path d="M5.3 12.3 H11.3" stroke="#1890ff" stroke-width="1.1"/></svg>
<div class="t " style="left:1764.5px;top:766.63px;font-size:13.2px;line-height:18px;color:#1890ff;font-weight:normal;">修改</div>
<svg style="left:1800px;top:770.73px" width="9" height="11" viewBox="0 0 9 11"><path d="M0.6 0.8 L4.4 5 L0.6 9.2 M4.2 0.8 L8 5 L4.2 9.2" fill="none" stroke="#1890ff" stroke-width="1.1"/></svg>
<div class="t " style="left:1812.5px;top:766.93px;font-size:13.2px;line-height:18px;color:#1890ff;font-weight:normal;">更多</div>
<div class="b" style="left:520px;top:856.3px;width:1362px;height:1px;background:#dfe6ec"></div>
<div class="t" style="left:443.50px;width:300px;text-align:center;top:820.71px;font-size:15.4px;line-height:20px;color:#606266;font-weight:normal;-webkit-text-stroke:0;">145</div>
<div class="t" style="left:589.00px;width:300px;text-align:center;top:820.71px;font-size:15.4px;line-height:20px;color:#606266;font-weight:normal;-webkit-text-stroke:0;">lyh123</div>
<div class="t" style="left:735.00px;width:300px;text-align:center;top:820.71px;font-size:15.4px;line-height:20px;color:#606266;font-weight:normal;">刘一华</div>
<div class="b" style="left:1288px;top:820.91px;width:44px;height:22px;background:#1890ff;border-radius:11px"></div>
<div class="b" style="left:1312.5px;top:822.91px;width:18px;height:18px;background:#fff;border-radius:50%"></div>
<div class="t" style="left:1306.00px;width:300px;text-align:center;top:820.71px;font-size:15.4px;line-height:20px;color:#606266;font-weight:normal;">内部员工</div>
<div class="t" style="left:1467.50px;width:300px;text-align:center;top:820.71px;font-size:15.4px;line-height:20px;color:#606266;font-weight:normal;-webkit-text-stroke:0;letter-spacing:-0.2px">2025-04-21 12:31:11</div>
<svg style="left:1750px;top:823.41px" width="12" height="13" viewBox="0 0 12 13"><path d="M1 12.2 L0.9 9.4 L7.2 0.7 L9.8 2.6 L3.5 11.4 Z" fill="none" stroke="#1890ff" stroke-width="1"/><path d="M5.3 12.3 H11.3" stroke="#1890ff" stroke-width="1.1"/></svg>
<div class="t " style="left:1764.5px;top:820.41px;font-size:13.2px;line-height:18px;color:#1890ff;font-weight:normal;">修改</div>
<svg style="left:1800px;top:824.51px" width="9" height="11" viewBox="0 0 9 11"><path d="M0.6 0.8 L4.4 5 L0.6 9.2 M4.2 0.8 L8 5 L4.2 9.2" fill="none" stroke="#1890ff" stroke-width="1.1"/></svg>
<div class="t " style="left:1812.5px;top:820.71px;font-size:13.2px;line-height:18px;color:#1890ff;font-weight:normal;">更多</div>
<div class="t " style="left:1332px;top:891.50px;font-size:14.3px;line-height:20px;color:#606266;font-weight:normal;">共 22 条</div>
<div class="b" style="left:1399px;top:887px;width:111px;height:40px;border:1px solid #dcdfe6;border-radius:3px;background:#fff"></div>
<div class="t " style="left:1422px;top:894.00px;font-size:14.3px;line-height:20px;color:#606266;font-weight:normal;">10条/页</div>
<svg style="left:1492px;top:901px" width="9" height="6" viewBox="0 0 9 6"><path d="M0.5 0.5 L4.5 5.5 L8.5 0.5" fill="none" stroke="#c0c4cc" stroke-width="1.1"/></svg>
<div class="b" style="left:1532px;top:887px;width:33px;height:40px;background:#f4f4f5;border-radius:2px"></div>
<svg style="left:1544.5px;top:895px" width="6" height="11" viewBox="0 0 6 11"><path d="M5.5 0.5 L0.8 5.5 L5.5 10.5" fill="none" stroke="#c0c4cc" stroke-width="1.2"/></svg>
<div class="b" style="left:1576px;top:887px;width:33px;height:40px;background:#1890ff;border-radius:2px"></div>
<div class="t" style="left:1577.50px;width:30px;text-align:center;top:892.00px;font-size:14.3px;line-height:20px;color:#fff;font-weight:bold;-webkit-text-stroke:0;">1</div>
<div class="b" style="left:1620px;top:887px;width:33px;height:40px;background:#f4f4f5;border-radius:2px"></div>
<div class="t" style="left:1621.50px;width:30px;text-align:center;top:892.00px;font-size:14.3px;line-height:20px;color:#606266;font-weight:bold;-webkit-text-stroke:0;">2</div>
<div class="b" style="left:1664px;top:887px;width:34px;height:40px;background:#f4f4f5;border-radius:2px"></div>
<div class="t" style="left:1666.00px;width:30px;text-align:center;top:892.00px;font-size:14.3px;line-height:20px;color:#606266;font-weight:bold;-webkit-text-stroke:0;">3</div>
<div class="b" style="left:1709px;top:887px;width:33px;height:40px;background:#f4f4f5;border-radius:2px"></div>
<svg style="left:1722px;top:895px" width="6" height="11" viewBox="0 0 6 11"><path d="M0.5 0.5 L5.2 5.5 L0.5 10.5" fill="none" stroke="#303133" stroke-width="1.2"/></svg>
<div class="t " style="left:1774.5px;top:892.50px;font-size:14.3px;line-height:20px;color:#606266;font-weight:normal;">前往</div>
<div class="b" style="left:1807.5px;top:887px;width:50px;height:40px;border:1px solid #dcdfe6;border-radius:3px;background:#fff"></div>
<div class="t" style="left:1817.50px;width:30px;text-align:center;top:892.00px;font-size:14.3px;line-height:20px;color:#606266;font-weight:normal;-webkit-text-stroke:0;">1</div>
<div class="t " style="left:1862.5px;top:892.50px;font-size:14.3px;line-height:20px;color:#606266;font-weight:normal;">页</div>
<div class="b" style="left:1718px;top:428px;width:121px;height:114px;background:#fff;border:1px solid #ebeef5;border-radius:4px;box-shadow:0 2px 12px rgba(0,0,0,0.1);z-index:10"></div>
<svg style="left:1807px;top:422px;z-index:11" width="14" height="7" viewBox="0 0 14 7"><path d="M0 7 L7 0.5 L14 7 Z" fill="#fff" stroke="#ebeef5" stroke-width="1"/><rect x="0" y="6" width="14" height="2" fill="#fff"/></svg>
<svg style="left:1737px;top:445.50px;z-index:11" width="14" height="14" viewBox="0 0 14 14"><path d="M1 3 H13 M4.5 3 V1 H9.5 V3 M2.5 3 V13 H11.5 V3 M5.5 5.5 V10.5 M8.5 5.5 V10.5" fill="none" stroke="#606266" stroke-width="1.1"/></svg>
<div class="t " style="left:1758px;top:442.50px;font-size:15.4px;line-height:20px;color:#606266;font-weight:normal;z-index:11">删除</div>
<svg style="left:1737px;top:478.50px;z-index:11" width="14" height="14" viewBox="0 0 14 14"><circle cx="7" cy="10" r="3" fill="none" stroke="#606266" stroke-width="1.1"/><path d="M7 7 V1 H9.5 M7 3.5 H9" fill="none" stroke="#606266" stroke-width="1.1"/></svg>
<div class="t " style="left:1758px;top:475.50px;font-size:15.4px;line-height:20px;color:#606266;font-weight:normal;z-index:11">重置密码</div>
<svg style="left:1737px;top:511.50px;z-index:11" width="14" height="14" viewBox="0 0 14 14"><circle cx="7" cy="7" r="6" fill="none" stroke="#606266" stroke-width="1.1"/><path d="M4 7.2 L6.2 9.2 L10 5" fill="none" stroke="#606266" stroke-width="1.1"/></svg>
<div class="t " style="left:1758px;top:508.50px;font-size:15.4px;line-height:20px;color:#606266;font-weight:normal;z-index:11">分配角色</div>
<svg style="left:0;top:0;z-index:20" width="1920" height="914" viewBox="0 0 1920 914"><defs><filter id="sh" x="-10%" y="-30%" width="130%" height="180%"><feGaussianBlur in="SourceAlpha" stdDeviation="2.2"/><feOffset dx="2" dy="3"/><feComponentTransfer><feFuncA type="linear" slope="0.55"/></feComponentTransfer><feMerge><feMergeNode/><feMergeNode in="SourceGraphic"/></feMerge></filter></defs><g filter="url(#sh)"><path d="M1416 480 L1644 461 L1625.2 434.6 L1718.8 459.2 L1630.3 499.9 L1645.8 472.4 L1416 492.2 A6.1 6.1 0 0 1 1416 480 Z" fill="#ff0000"/></g></svg>
</body></html>
